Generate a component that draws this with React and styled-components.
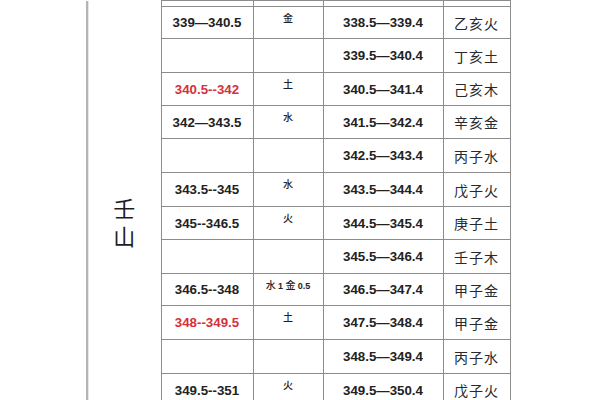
import React from "react";
import styled, { createGlobalStyle } from "styled-components";

const Global = createGlobalStyle`
  html, body { margin: 0; padding: 0; background: #ffffff; }
  body { width: 600px; height: 400px; overflow: hidden; }
`;

const Page = styled.div`
  display: flex;
  width: 600px;
  height: 400px;
  overflow: hidden;
  padding-left: 86px;
  box-sizing: border-box;
  background: #fff;
`;

const Table = styled.table`
  border-collapse: collapse;
  table-layout: fixed;
  width: 423px;
  height: 405px;
  align-self: flex-start;
`;

const Row = styled.tr`
  height: ${(p) => p.$h}px;
`;

const MountainCell = styled.td`
  width: 72px;
  border-left: 2px solid #b4b4b4;
  border-right: 1px solid #8c8c8c;
  box-shadow: inset 6px 0 0 -5px #e6e6e6;
  padding: 0;
  vertical-align: top;
`;

const Mountain = styled.div`
  display: flex;
  justify-content: center;
  padding-top: 197px;
`;

const MountainName = styled.span`
  writing-mode: vertical-rl;
  text-orientation: upright;
  font-family: "Noto Sans CJK SC", sans-serif;
  font-size: 22px;
  line-height: 24px;
  letter-spacing: 6px;
  color: #1e1e1e;
`;

const Cell = styled.td`
  border: 1px solid #8c8c8c;
  padding: 0;
  text-align: center;
  vertical-align: middle;
  font-family: "Liberation Sans", Arial, sans-serif;
  font-weight: 700;
  font-size: 13.3px;
  color: ${(p) => (p.$red ? "#d6303c" : "#222")};
  white-space: nowrap;
  overflow: hidden;
`;

const ElementCell = styled.td`
  border: 1px solid #8c8c8c;
  padding: 5px 0 0;
  text-align: center;
  vertical-align: top;
  font-family: "Noto Sans CJK SC", sans-serif;
  font-weight: 500;
  font-size: 10px;
  line-height: 11px;
  color: #222;
  white-space: nowrap;
  overflow: hidden;
`;

const Small = styled.span`
  font-family: "Liberation Sans", Arial, sans-serif;
  font-weight: 700;
  font-size: 9px;
`;

const GanCell = styled.td`
  border: 1px solid #8c8c8c;
  padding: 0;
  text-align: center;
  vertical-align: middle;
  font-family: "Noto Sans CJK SC", sans-serif;
  font-size: 14px;
  letter-spacing: 1px;
  color: #2a2a2a;
  white-space: nowrap;
  overflow: hidden;
`;

const rows = [
  { h: 32, a: "339—340.5", e: "金", b: "338.5—339.4", g: "乙亥火" },
  { h: 34, a: "", e: "", b: "339.5—340.4", g: "丁亥土" },
  { h: 33, a: "340.5--342", red: true, e: "土", b: "340.5—341.4", g: "己亥木" },
  { h: 33, a: "342—343.5", e: "水", b: "341.5—342.4", g: "辛亥金" },
  { h: 34, a: "", e: "", b: "342.5—343.4", g: "丙子水" },
  { h: 34, a: "343.5--345", e: "水", b: "343.5—344.4", g: "戊子火" },
  { h: 33, a: "345--346.5", e: "火", b: "344.5—345.4", g: "庚子土" },
  { h: 34, a: "", e: "", b: "345.5—346.4", g: "壬子木" },
  { h: 32, a: "346.5--348", e: "mix", b: "346.5—347.4", g: "甲子金" },
  { h: 34, a: "348--349.5", red: true, e: "土", b: "347.5—348.4", g: "甲子金" },
  { h: 34, a: "", e: "", b: "348.5—349.4", g: "丙子水" },
  { h: 33, a: "349.5--351", e: "火", b: "349.5—350.4", g: "戊子火" },
];

export default function App() {
  return (
    <>
      <Global />
      <Page>
        <Table>
          <colgroup>
            <col style={{ width: 74 }} />
            <col style={{ width: 92 }} />
            <col style={{ width: 70 }} />
            <col style={{ width: 120 }} />
            <col style={{ width: 67 }} />
          </colgroup>
          <tbody>
            <Row $h={5}>
              <MountainCell rowSpan={13}>
                <Mountain>
                  <MountainName>壬山</MountainName>
                </Mountain>
              </MountainCell>
              <Cell />
              <ElementCell />
              <Cell />
              <GanCell />
            </Row>
            {rows.map((r, i) => (
              <Row key={i} $h={r.h}>
                <Cell $red={r.red}>{r.a}</Cell>
                <ElementCell>
                  {r.e === "mix" ? (
                    <>
                      水 <Small>1</Small> 金 <Small>0.5</Small>
                    </>
                  ) : (
                    r.e
                  )}
                </ElementCell>
                <Cell>{r.b}</Cell>
                <GanCell>{r.g}</GanCell>
              </Row>
            ))}
          </tbody>
        </Table>
      </Page>
    </>
  );
}
